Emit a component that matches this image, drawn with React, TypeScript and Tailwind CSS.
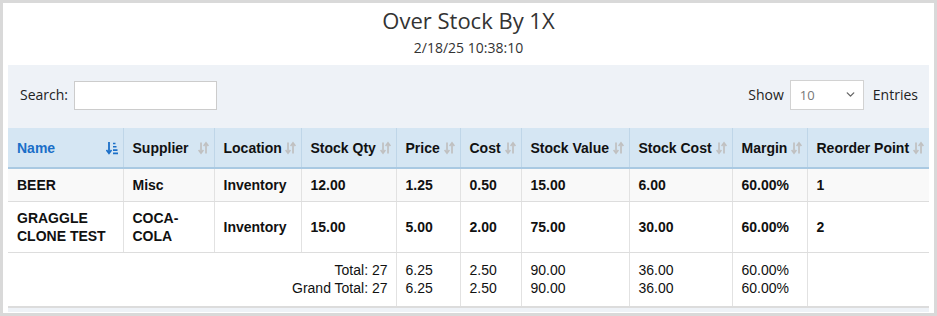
import { ChevronDown } from "lucide-react";

const columns = [
  { label: "Name", width: 115 },
  { label: "Supplier", width: 91 },
  { label: "Location", width: 87 },
  { label: "Stock Qty", width: 95 },
  { label: "Price", width: 64 },
  { label: "Cost", width: 61 },
  { label: "Stock Value", width: 108 },
  { label: "Stock Cost", width: 103 },
  { label: "Margin", width: 75 },
  { label: "Reorder Point", width: 122 },
];

const rows = [
  ["BEER", "Misc", "Inventory", "12.00", "1.25", "0.50", "15.00", "6.00", "60.00%", "1"],
  ["GRAGGLE CLONE TEST", "COCA-COLA", "Inventory", "15.00", "5.00", "2.00", "75.00", "30.00", "60.00%", "2"],
];

const totals = [
  ["6.25", "6.25"],
  ["2.50", "2.50"],
  ["90.00", "90.00"],
  ["36.00", "36.00"],
  ["60.00%", "60.00%"],
  ["", ""],
];

const SortIcon = () => (
  <svg width="11" height="14" viewBox="0 0 11 14" className="shrink-0">
    {/* down arrow */}
    <path d="M3 1.5v10" stroke="#c0c0c0" strokeWidth="1.7" />
    <path d="M0.6 9l2.4 3.2L5.4 9" fill="none" stroke="#c0c0c0" strokeWidth="1.5" />
    {/* up arrow */}
    <path d="M8 12.5v-10" stroke="#c0c0c0" strokeWidth="1.7" />
    <path d="M5.6 5L8 1.8 10.4 5" fill="none" stroke="#c0c0c0" strokeWidth="1.5" />
  </svg>
);

const SortActiveIcon = () => (
  <svg width="12" height="14" viewBox="0 0 12 14" className="shrink-0">
    <path d="M3 1v10.5" stroke="#1b6fc8" strokeWidth="1.8" />
    <path d="M0.5 9l2.5 3.4L5.5 9" fill="none" stroke="#1b6fc8" strokeWidth="1.6" />
    <path d="M7 2.5h2.5M7 5.8h3.5M7 9.1h4.5M7 12.4h5" stroke="#1b6fc8" strokeWidth="1.6" />
  </svg>
);

export default function App() {
  return (
    <div className="w-[937px] h-[316px] overflow-hidden border-[3px] border-[#d9d9d9] bg-white">
      {/* Heading */}
      <div className="flex flex-col items-center pt-[2px] pb-[7px] font-['Open_Sans',sans-serif] text-[#333]">
        <h1 className="text-[22px] leading-[30px]">Over Stock By 1X</h1>
        <div className="mt-[3px] text-[14px] leading-[20px]">2/18/25 10:38:10</div>
      </div>

      {/* Panel */}
      <div className="mx-[5px] bg-[#eef2f7] pb-[4px]">
        <div className="flex h-[63px] items-center justify-between pb-[4px] pl-[12px] pr-[11px] font-['Open_Sans',sans-serif] text-[14px] text-[#222]">
          <div className="flex items-center">
            <span>Search:</span>
            <input className="ml-[6px] mt-[2px] h-[29px] w-[143px] border border-[#cccccc] bg-white" />
          </div>
          <div className="flex items-center">
            <span>Show</span>
            <div className="ml-[6px] flex h-[30px] w-[74px] items-center justify-between border border-[#d2d2d2] bg-white pl-[9px] pr-[6px] text-[13px] text-[#777]">
              <span className="mt-[2px]">10</span>
              <ChevronDown size={13} strokeWidth={2.5} className="text-[#666]" />
            </div>
            <span className="ml-[9px]">Entries</span>
          </div>
        </div>

        <table className="w-full table-fixed border-collapse border-b-2 border-[#dcdcdc] font-['Liberation_Sans',Arial,sans-serif] text-[14px] leading-[18px] text-[#111]">
          <colgroup>
            {columns.map((c) => (
              <col key={c.label} style={{ width: c.width }} />
            ))}
          </colgroup>
          <thead>
            <tr className="h-[40px] bg-[#d5e6f3]">
              {columns.map((c, i) => (
                <th
                  key={c.label}
                  className={`border-b-2 border-b-[#a9c9e2] p-0 text-left font-bold ${
                    i > 0 ? "border-l border-l-[#bfd6e8]" : ""
                  }`}
                >
                  <div className="flex items-center justify-between pl-[9px] pr-[5px]">
                    <span className={i === 0 ? "text-[#1b6fc8]" : "text-[#111]"}>{c.label}</span>
                    {i === 0 ? <SortActiveIcon /> : <SortIcon />}
                  </div>
                </th>
              ))}
            </tr>
          </thead>
          <tbody>
            {rows.map((r, ri) => (
              <tr key={ri} className={ri === 0 ? "h-[33px] bg-[#f9f9f9]" : "h-[51px] bg-white"}>
                {r.map((cell, ci) => (
                  <td
                    key={ci}
                    className={`border-b border-b-[#dddddd] py-[7px] pl-[9px] pr-[6px] font-bold ${
                      ci > 0 ? "border-l border-l-[#e2e2e2]" : ""
                    }`}
                  >
                    {cell}
                  </td>
                ))}
              </tr>
            ))}
            <tr className="h-[54px] bg-white">
              <td colSpan={4} className="py-[7px] pr-[8px] text-right">
                <div>Total: 27</div>
                <div>Grand Total: 27</div>
              </td>
              {totals.map((t, i) => (
                <td key={i} className="border-l border-l-[#e2e2e2] py-[7px] pl-[9px] align-middle">
                  <div className="h-[18px]">{t[0]}</div>
                  <div className="h-[18px]">{t[1]}</div>
                </td>
              ))}
            </tr>
          </tbody>
        </table>
      </div>
    </div>
  );
}
